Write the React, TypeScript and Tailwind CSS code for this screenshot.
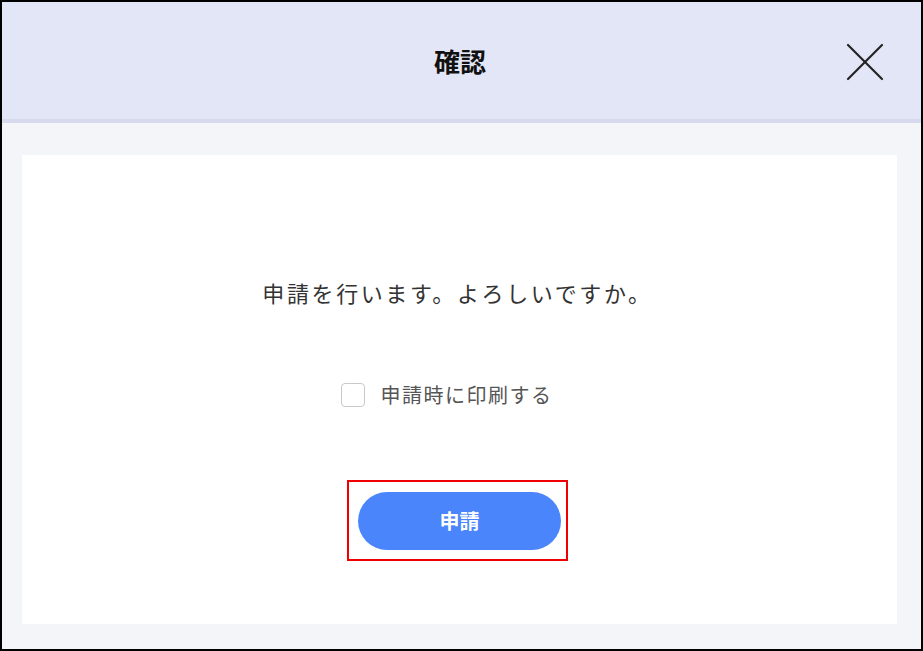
export default function App() {
  return (
    <div
      className="w-[923px] h-[651px] border-2 border-black flex flex-col bg-[#f4f5f9]"
      style={{ fontFamily: '"Noto Sans CJK JP", "Noto Sans", sans-serif' }}
    >
      {/* ヘッダー */}
      <div className="h-[121px] shrink-0 bg-[#e3e6f6] border-b-[4px] border-[#d7d9ef] grid grid-cols-[1fr_auto_1fr] items-center">
        <div />
        <h1 className="text-[26px] font-bold text-[#111] leading-none mr-[3px]">確認</h1>
        <div className="justify-self-end pr-[37px] pt-[2px]">
          <button className="w-[38px] h-[38px] flex items-center justify-center text-[#222]">
            <svg width="38" height="38" viewBox="0 0 38 38" fill="none" stroke="currentColor" strokeWidth="2.2" strokeLinecap="round">
              <line x1="2" y1="2" x2="36" y2="36" />
              <line x1="36" y1="2" x2="2" y2="36" />
            </svg>
          </button>
        </div>
      </div>

      {/* 本文 */}
      <div className="flex-1 pl-[20px] pr-[24px] pt-[32px] pb-[25px]">
        <div className="h-full bg-white flex flex-col items-center pt-[122px]">
          <p className="text-[22px] leading-[30px] tracking-[2.6px] text-[#333] mr-[4px]">申請を行います。よろしいですか。</p>

          <label className="mt-[73px] flex items-center gap-[16px] h-[30px] pr-[26px]">
            <span className="w-[24px] h-[24px] rounded-[4px] border border-[#c9c9c9] bg-white" />
            <span className="text-[20px] leading-[30px] text-[#555] tracking-[1.5px]">申請時に印刷する</span>
          </label>

          <div className="mt-[70px] mr-[4px] border-2 border-[#f00000] pt-[10px] pb-[9px] pl-[9px] pr-[5px]">
            <button className="w-[203px] h-[58px] rounded-full bg-[#4b85fb] text-white text-[20px] font-bold">
              申請
            </button>
          </div>
        </div>
      </div>
    </div>
  )
}
